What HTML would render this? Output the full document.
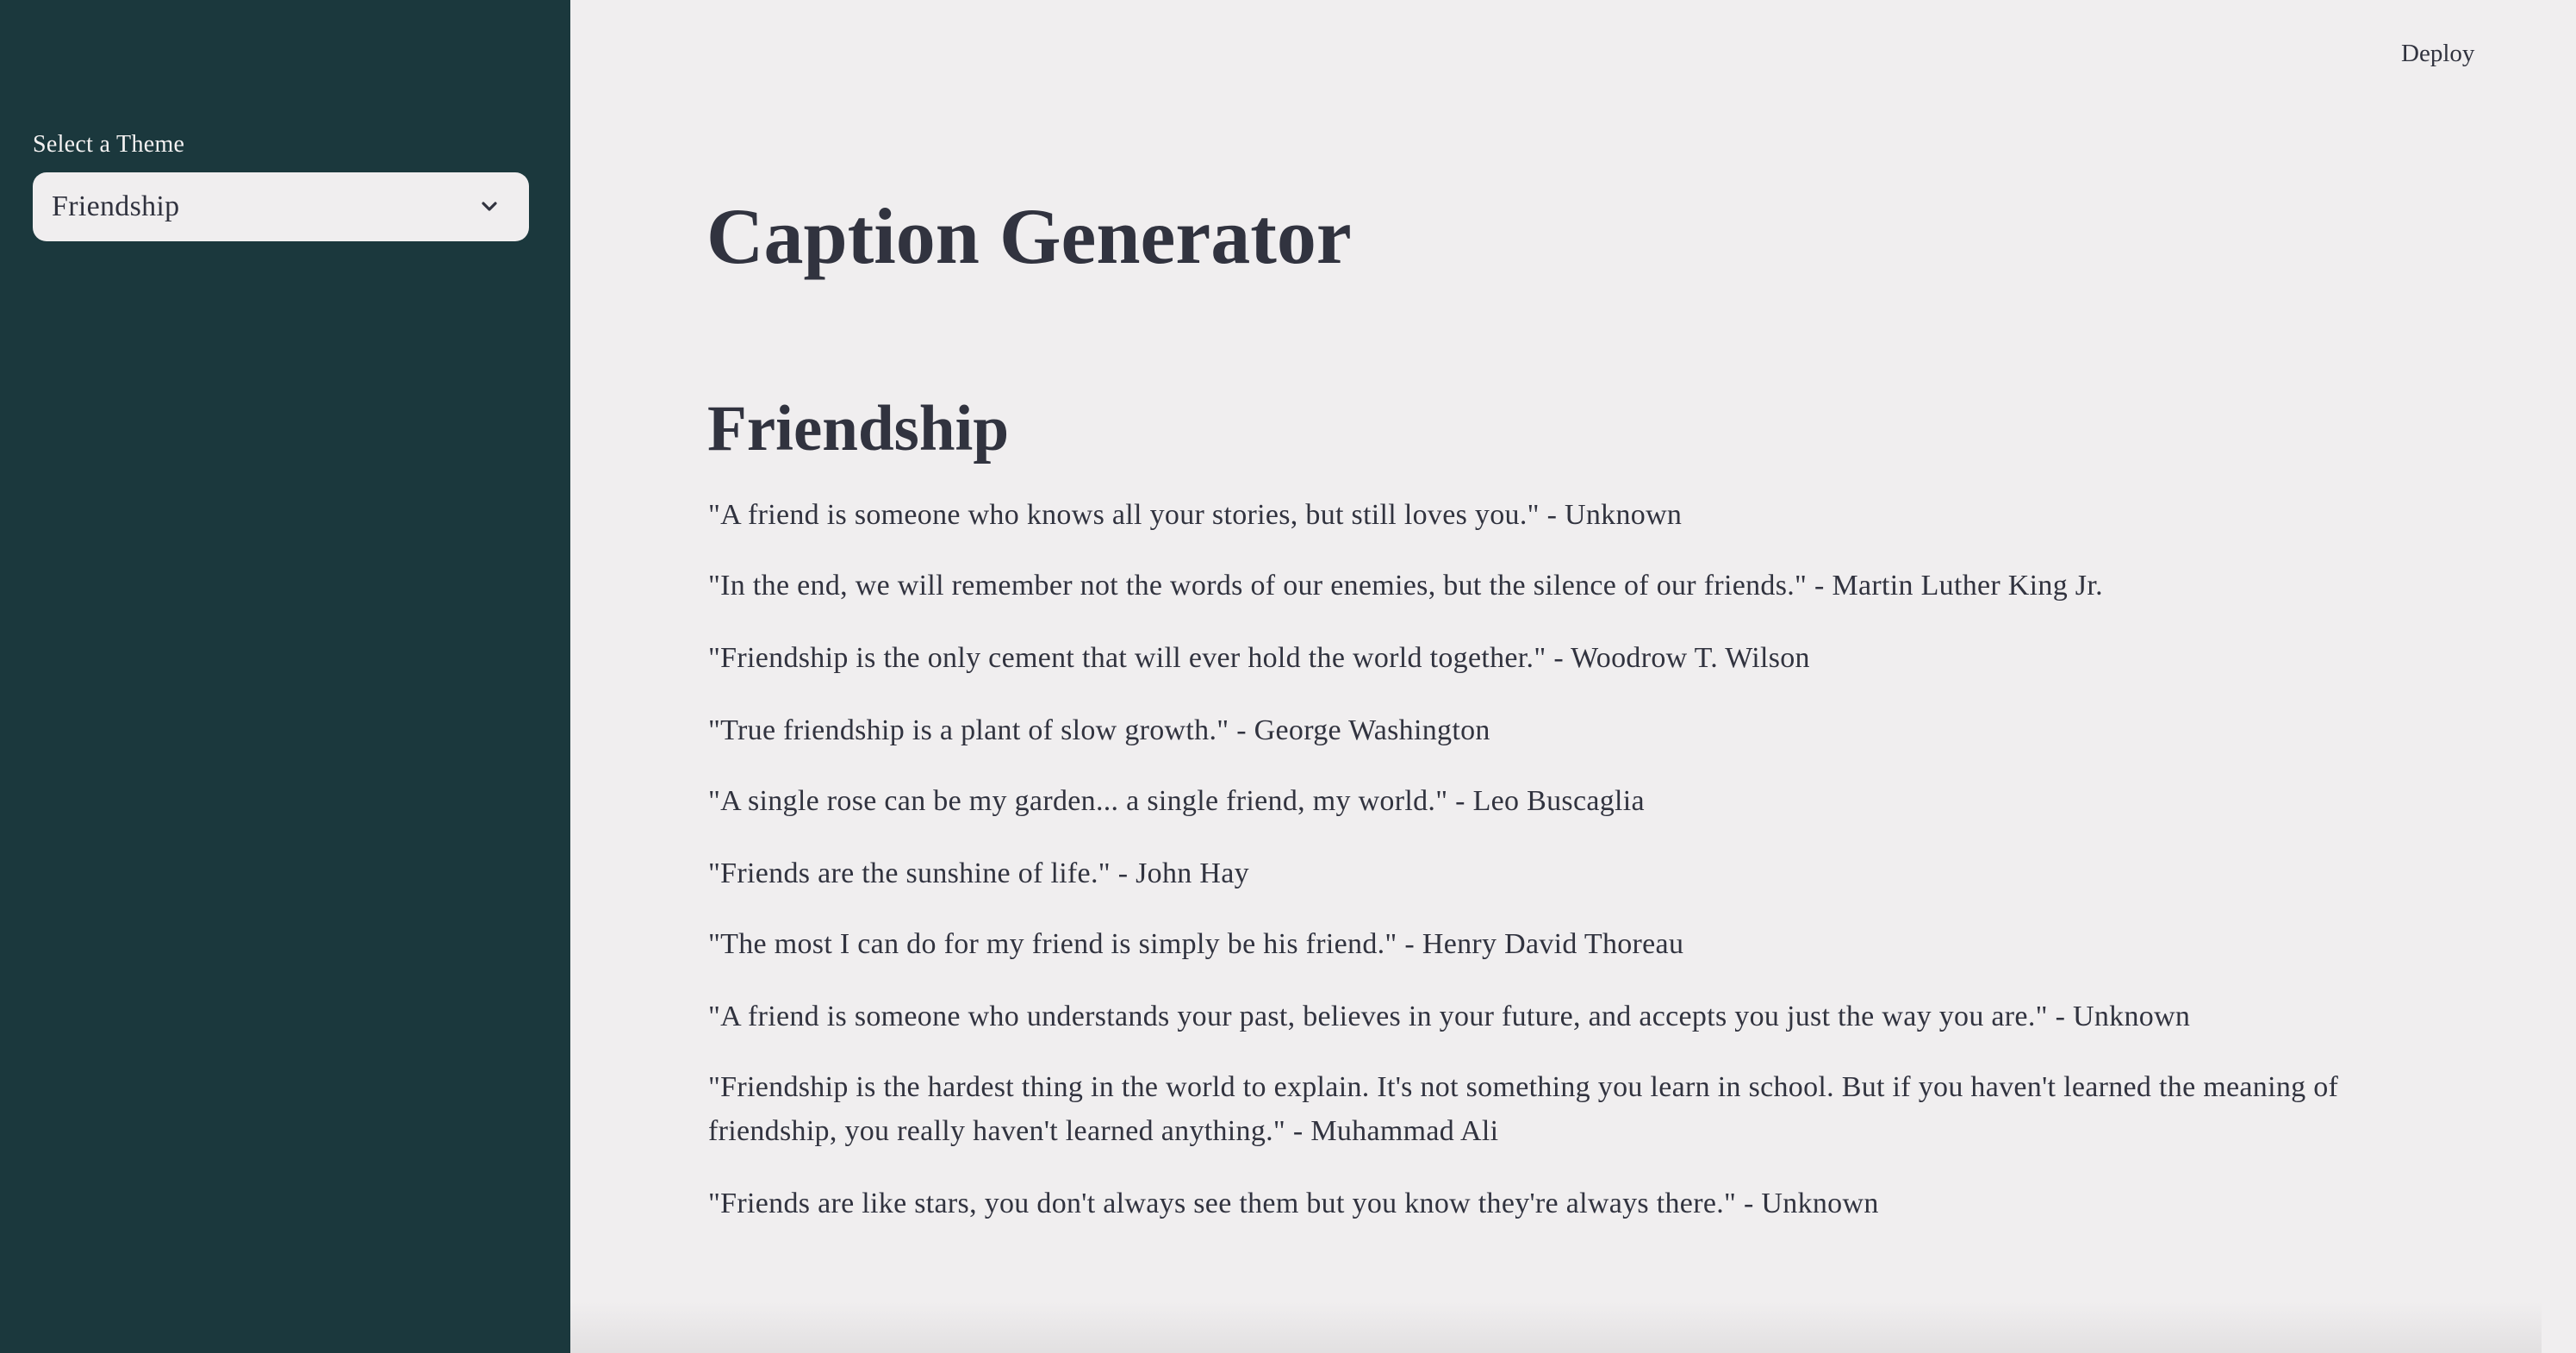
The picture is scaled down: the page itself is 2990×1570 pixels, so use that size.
<!DOCTYPE html>
<html><head><meta charset="utf-8"><style>
*{margin:0;padding:0;box-sizing:border-box}
html,body{width:2990px;height:1570px;overflow:hidden;background:#f0eeef;font-family:"Liberation Serif",serif;color:#31333f}
#side{position:absolute;left:0;top:0;width:662px;height:1570px;background:#1b383d}
.lbl{position:absolute;left:38px;top:150px;font-size:28px;color:#f4f2f2;line-height:36px;letter-spacing:0.3px}
.sel{position:absolute;left:38px;top:200px;width:576px;height:80px;background:#f0eeef;border-radius:16px}
.sel span{position:absolute;left:22px;top:20px;font-size:34px;line-height:40px;color:#31333f;letter-spacing:0.3px}
.sel svg{position:absolute;left:519px;top:29px}
.dep{position:absolute;left:2787px;top:44px;font-size:29px;line-height:36px}
h1{position:absolute;left:820px;top:214px;font-size:92px;line-height:120px;font-weight:700;white-space:nowrap}
h2{position:absolute;left:821px;top:452px;font-size:75px;line-height:92px;font-weight:700;white-space:nowrap}
.q{position:absolute;left:822px;font-size:34px;line-height:51px;white-space:nowrap;letter-spacing:0.3px}
.sh{position:absolute;left:662px;right:40px;top:1510px;height:60px;background:linear-gradient(#f0eeef00,#e2e0e1)}
</style></head><body>
<div id="side">
<div class="lbl">Select a Theme</div>
<div class="sel"><span>Friendship</span><svg width="22" height="22" viewBox="0 0 22 22"><path d="M4 7l7 7 7-7" fill="none" stroke="#31333f" stroke-width="3.2" stroke-linecap="round" stroke-linejoin="round"/></svg></div>
</div>
<div class="sh"></div>
<div class="dep">Deploy</div>
<h1>Caption Generator</h1>
<h2>Friendship</h2>
<div class="q" style="top:572px">"A friend is someone who knows all your stories, but still loves you." - Unknown</div>
<div class="q" style="top:654px">"In the end, we will remember not the words of our enemies, but the silence of our friends." - Martin Luther King Jr.</div>
<div class="q" style="top:738px">"Friendship is the only cement that will ever hold the world together." - Woodrow T. Wilson</div>
<div class="q" style="top:822px">"True friendship is a plant of slow growth." - George Washington</div>
<div class="q" style="top:904px">"A single rose can be my garden... a single friend, my world." - Leo Buscaglia</div>
<div class="q" style="top:988px">"Friends are the sunshine of life." - John Hay</div>
<div class="q" style="top:1070px">"The most I can do for my friend is simply be his friend." - Henry David Thoreau</div>
<div class="q" style="top:1154px">"A friend is someone who understands your past, believes in your future, and accepts you just the way you are." - Unknown</div>
<div class="q" style="top:1236px">"Friendship is the hardest thing in the world to explain. It's not something you learn in school. But if you haven't learned the meaning of<br>friendship, you really haven't learned anything." - Muhammad Ali</div>
<div class="q" style="top:1371px">"Friends are like stars, you don't always see them but you know they're always there." - Unknown</div>
</body></html>
